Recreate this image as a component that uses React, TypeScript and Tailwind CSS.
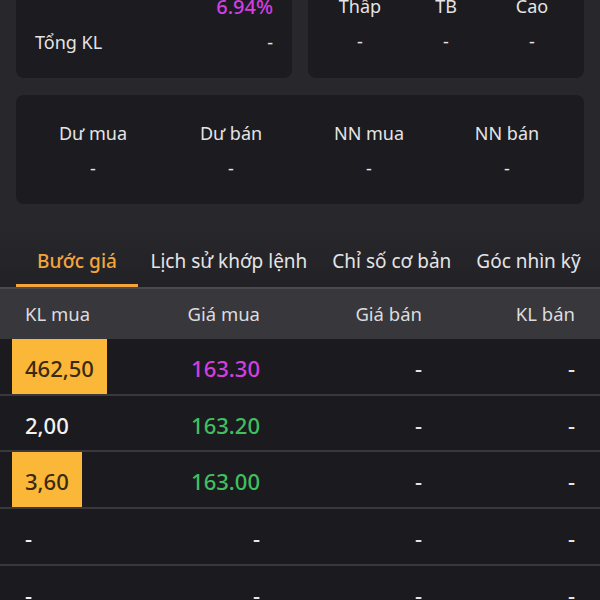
import React from "react";

type Level = { kl: string; price: string; priceColor: string; hl: boolean };

const levels: Level[] = [
  { kl: "462,50", price: "163.30", priceColor: "text-[#d43ee0]", hl: true },
  { kl: "2,00", price: "163.20", priceColor: "text-[#3fbf5e]", hl: false },
  { kl: "3,60", price: "163.00", priceColor: "text-[#3fbf5e]", hl: true },
  { kl: "-", price: "-", priceColor: "text-[#e8e8e8]", hl: false },
  { kl: "-", price: "-", priceColor: "text-[#e8e8e8]", hl: false },
];

const tabs = ["Bước giá", "Lịch sử khớp lệnh", "Chỉ số cơ bản", "Góc nhìn kỹ"];

const cols = "grid grid-cols-[108px_140px_162px_153px] pl-3";

function Stat({ label }: { label: string }) {
  return (
    <div className="flex flex-col items-center gap-[11px]">
      <span className="leading-6">{label}</span>
      <span className="leading-6">-</span>
    </div>
  );
}

export default function App() {
  return (
    <div className="h-[600px] w-[600px] overflow-hidden bg-[#28272c] font-['Noto_Sans',sans-serif] text-[18px] text-[#e4e4e6]">
      <div className="-mt-5 flex gap-4 px-4">
        <div className="flex w-[276px] flex-col gap-[11px] rounded-lg bg-[#1c1b1f] px-[19px] pb-6 pt-[15px]">
          <div className="text-right text-[20px] font-medium leading-6 text-[#d43ee0]">6.94%</div>
          <div className="flex justify-between leading-6">
            <span>Tổng KL</span>
            <span>-</span>
          </div>
        </div>
        <div className="grid w-[276px] grid-cols-3 rounded-lg bg-[#1c1b1f] px-[9px] pb-[25px] pt-[14px]">
          <Stat label="Thấp" />
          <Stat label="TB" />
          <Stat label="Cao" />
        </div>
      </div>

      <div className="mx-4 mt-[17px] grid grid-cols-4 rounded-lg bg-[#1c1b1f] px-2 pb-6 pt-[26px]">
        <Stat label="Dư mua" />
        <Stat label="Dư bán" />
        <Stat label="NN mua" />
        <Stat label="NN bán" />
      </div>

      <div className="mt-[22px] flex border-b-2 border-[#4a494e] bg-gradient-to-b from-[#28272c] to-[#222126] pl-4 pt-[23px] text-[19px]">
        {tabs.map((t, i) => (
          <div
            key={t}
            className={
              i === 0
                ? "min-w-[122px] border-b-[3px] border-[#f3a53c] pb-[11px] text-center font-medium leading-6 text-[#f3a53c]"
                : "whitespace-nowrap px-[12.5px] pb-[14px] leading-6"
            }
          >
            {t}
          </div>
        ))}
      </div>

      <div className={`${cols} h-[50px] items-center bg-[#38373c] text-[18.5px] text-[#dcdcdf]`}>
        <span className="pl-[13px]">KL mua</span>
        <span className="text-right">Giá mua</span>
        <span className="text-right">Giá bán</span>
        <span className="text-right">KL bán</span>
      </div>

      <div className="bg-[#1b1a1e]">
        {levels.map((l, i) => (
          <div
            key={i}
            className={`${cols} h-[56.7px] items-center border-b-2 border-[#39383d] text-[22px] font-medium`}
          >
            <div className="flex h-full items-stretch">
              <span
                className={
                  l.hl
                    ? "flex items-center bg-[#fbb737] px-[13px] pt-1 text-[#3a2a12]"
                    : "flex items-center px-[13px] pt-1 text-[#f2f2f2]"
                }
              >
                {l.kl}
              </span>
            </div>
            <span className={`pt-1 text-right ${l.priceColor}`}>{l.price}</span>
            <span className="pt-1 text-right">-</span>
            <span className="pt-1 text-right">-</span>
          </div>
        ))}
      </div>
    </div>
  );
}
